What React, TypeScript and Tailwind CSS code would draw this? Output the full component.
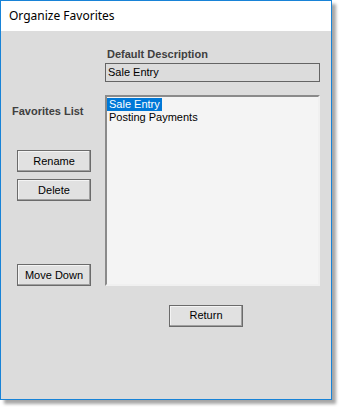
import React from 'react';

const ui = { fontFamily: '"Liberation Sans", Arial, sans-serif' };

const WinButton: React.FC<{ label: string; className?: string }> = ({ label, className = '' }) => (
  <button
    className={`w-[74px] h-[22px] bg-[#e1e1e1] border border-[#6b6b6b] shadow-[inset_-1px_-1px_0_#a0a0a0,inset_1px_1px_0_#f4f4f4] text-[11px] text-black leading-none ${className}`}
    style={ui}
  >
    {label}
  </button>
);

const App: React.FC = () => {
  return (
    <div className="w-[339px] h-[407px] bg-white">
      <div className="w-[332px] h-[400px] flex flex-col border border-[#1883d7] shadow-[4px_4px_3px_rgba(0,0,0,0.35)]">
        {/* title bar */}
        <div className="h-[30px] bg-white flex items-center pl-[8px]">
          <span className="text-[12px] text-black" style={{ fontFamily: '"Segoe UI", "Noto Sans", sans-serif' }}>
            Organize Favorites
          </span>
        </div>

        {/* body */}
        <div className="flex-1 bg-[#dcdcdc] flex flex-col" style={ui}>
          <div className="pl-[104px] pt-[17px]">
            <div className="text-[11px] leading-[13px] font-bold text-[#404040] pl-[2px]">Default Description</div>
            <div className="mt-[2px] w-[215px] h-[19px] border border-[#646464] flex items-center pl-[2px] text-[11px] text-black">
              Sale Entry
            </div>
          </div>

          <div className="flex mt-[13px]">
            <div className="w-[104px] flex flex-col">
              <div className="mt-[10px] pl-[11px] text-[11px] leading-[13px] font-bold text-[#404040]">Favorites List</div>
              <div className="pl-[16px] mt-[32px] flex flex-col gap-[7px]">
                <WinButton label="Rename" />
                <WinButton label="Delete" />
              </div>
              <div className="pl-[16px] mt-auto">
                <WinButton label="Move Down" />
              </div>
            </div>
            <div className="w-[215px] h-[191px] bg-[#f4f4f4] border-2 border-t-[#8a8a8a] border-l-[#8a8a8a] border-b-[#f0f0f0] border-r-[#f0f0f0] pt-[1px] text-[11px] leading-[13px] text-black">
              <div>
                <span className="bg-[#0078d7] text-white px-[2px] inline-block">Sale Entry</span>
              </div>
              <div className="pl-[2px]">Posting Payments</div>
            </div>
          </div>

          <div className="mt-[16px] pl-[168px]">
            <WinButton label="Return" />
          </div>
        </div>
      </div>
    </div>
  );
};

export default App;
